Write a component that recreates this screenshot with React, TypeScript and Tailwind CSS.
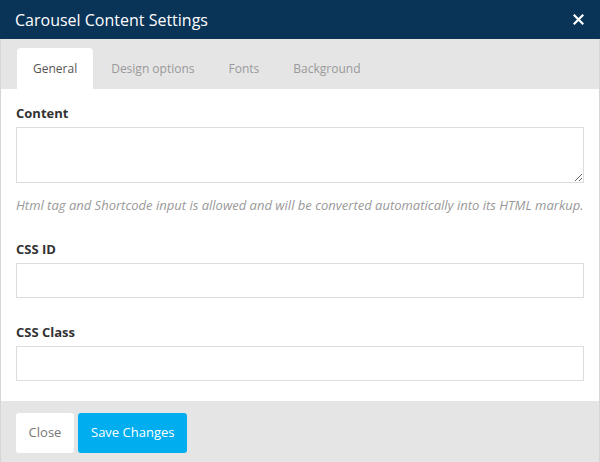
import React, { useState } from 'react';

const tabs = ['General', 'Design options', 'Fonts', 'Background'];

export default function App() {
  const [active, setActive] = useState('General');

  return (
    <div
      className="w-[600px] h-[462px] flex flex-col bg-[#e5e5e5] border-x border-[#d6d6d6]"
      style={{ fontFamily: '"Open Sans", "Liberation Sans", sans-serif' }}
    >
      <div className="h-[39px] shrink-0 bg-[#0a3358] flex items-center justify-between pl-[15px] pr-[16px] -mx-px">
        <h1 className="text-white text-[16px] leading-none">Carousel Content Settings</h1>
        <button className="text-white" aria-label="Close">
          <svg width="11" height="11" viewBox="0 0 11 11" fill="none">
            <path d="M1.5 1.5L9.5 9.5M9.5 1.5L1.5 9.5" stroke="white" strokeWidth="2.2" strokeLinecap="square" />
          </svg>
        </button>
      </div>

      <div className="h-[50px] shrink-0 flex items-end pl-[16px] gap-[2px]">
        {tabs.map((t) => (
          <button
            key={t}
            onClick={() => setActive(t)}
            className={
              active === t
                ? 'h-[41px] px-[16px] rounded-t-[4px] bg-white text-[12px] text-[#555]'
                : 'h-[41px] px-[16px] text-[12px] text-[#999]'
            }
          >
            {t}
          </button>
        ))}
      </div>

      <div className="bg-white px-[15px] pt-[15px] pb-[20px] flex flex-col">
        <label className="text-[13px] leading-[18px] font-bold text-[#333] mb-[5px]">Content</label>
        <textarea className="h-[56px] w-full border border-[#ddd] resize-y outline-none text-[13px] px-2 py-1" />
        <p className="mt-[13px] text-[13px] leading-[18px] italic text-[#999]">
          Html tag and Shortcode input is allowed and will be converted automatically into its HTML markup.
        </p>

        <label className="mt-[26px] text-[13px] leading-[18px] font-bold text-[#333] mb-[5px]">CSS ID</label>
        <input className="h-[35px] w-full border border-[#ddd] outline-none text-[13px] px-2" />

        <label className="mt-[25px] text-[13px] leading-[18px] font-bold text-[#333] mb-[5px]">CSS Class</label>
        <input className="h-[35px] w-full border border-[#ddd] outline-none text-[13px] px-2" />
      </div>

      <div className="flex-1 flex items-start gap-[4px] px-[15px] pt-[12px]">
        <button className="h-[40px] w-[58px] bg-white rounded-[3px] text-[13px] text-[#777]">Close</button>
        <button className="h-[40px] px-[13px] bg-[#00aeef] rounded-[3px] text-[13px] text-white">Save Changes</button>
      </div>
    </div>
  );
}
